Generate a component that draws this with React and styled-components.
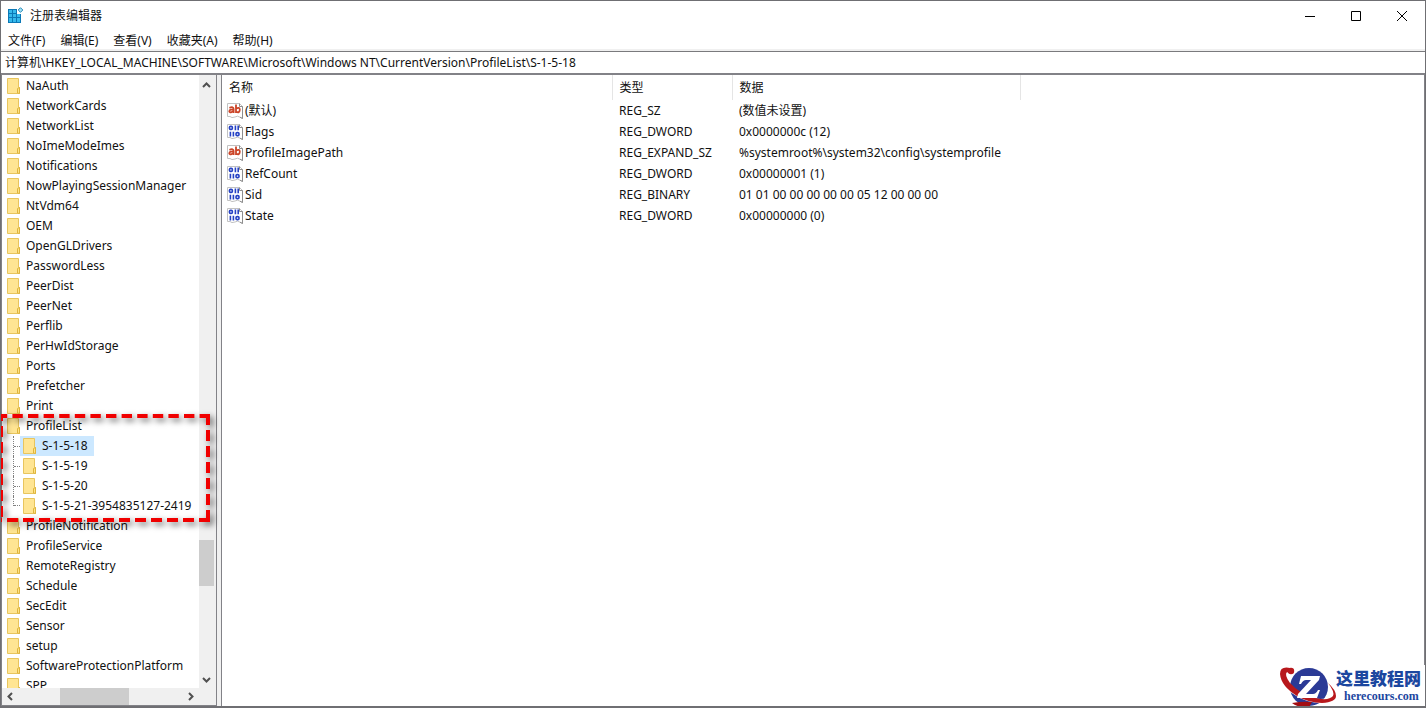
import React from "react";
import styled, { createGlobalStyle, css } from "styled-components";

const Global = createGlobalStyle`
  * { box-sizing: border-box; }
  body { margin: 0; font: 12px/20px "Noto Sans", "Noto Sans CJK SC", sans-serif; color: #111; background: #fff; }
  button, input { font: inherit; color: inherit; }
`;

const Window = styled.div`
  display: flex; flex-direction: column; height: 100vh; background: #fff;
  border: 1px solid #6f6f73; border-bottom-width: 2px; overflow: hidden; position: relative;
`;
const TitleBar = styled.header`
  display: flex; align-items: center; height: 29px; padding-left: 6px;
`;
const Title = styled.h1`
  margin: 0 auto 0 6px; font-size: 12px; font-weight: 400;
`;
const CaptionButton = styled.button`
  display: grid; place-items: center; width: 46px; height: 29px; padding: 0; border: 0; background: none;
`;
const MenuBar = styled.nav`
  display: flex; align-items: flex-end; height: 21px; padding-left: 7px; gap: 15px; background: linear-gradient(#fff 19px, #f0f0f0 19px);
`;
const MenuButton = styled.button`
  padding: 0; border: 0; background: none; line-height: 20px;
`;
const Address = styled.input`
  flex: none; width: 100%; height: 24px; padding: 0 4px 2px; border: 0; outline: 0; background: #fff;
  border-top: 1px solid #7a7a7d; border-bottom: 2px solid #828287; border-radius: 0;
`;
const Panes = styled.main`
  display: grid; grid-template-columns: 216px 1fr; column-gap: 4px; flex: 1; min-height: 0; background: #f0f0f0;
`;
const TreePane = styled.section`
  position: relative; display: grid; grid-template: 1fr 17px / 1fr 15px; min-width: 0; min-height: 0;
  padding-right: 2px; border: 0 solid #828287; border-width: 0 1px 1px; background: #f0f0f0;
`;
const TreeView = styled.div`
  overflow: hidden; background: #fff; padding-top: 1px;
`;
const List = styled.ul`
  list-style: none; margin: 0; padding: 0;
`;
const Row = styled.div`
  display: flex; align-items: center; height: 20px; white-space: nowrap;
  padding-left: ${(p) => (p.$nested ? 11 : 2)}px;
`;
const Guide = styled.span`
  flex: none; align-self: flex-start; display: flex; align-items: center;
  width: 7px; border-left: 1px dotted #808080;
  height: ${(p) => (p.$last ? 10 : 20)}px;
  &::after { content: ""; width: 7px; border-top: 1px dotted #808080; ${(p) => p.$last && css`align-self: flex-end;`} }
`;
const Label = styled.span`
  display: flex; align-items: center; gap: 5px; height: 20px; padding: 0 6px 0 3px;
  background: ${(p) => (p.$selected ? "#cce8ff" : "transparent")};
`;
const ScrollBar = styled.div`
  display: flex; background: #f0f0f0;
  flex-direction: ${(p) => (p.$vertical ? "column" : "row")};
  padding: ${(p) => (p.$vertical ? "2px 0 0" : "0 1px")};
`;
const ScrollButton = styled.button`
  display: grid; place-items: center; width: 15px; height: 17px; padding: 0; border: 0; background: none; flex: none;
`;
const Space = styled.span`
  flex: ${(p) => p.$size};
`;
const Thumb = styled.span`
  flex: ${(p) => p.$size}; background: #cdcdcd;
`;
const Marker = styled.svg`
  position: absolute; left: -2px; top: 339px; overflow: visible; pointer-events: none;
  filter: drop-shadow(3px 3px 3px rgba(0, 0, 0, 0.6));
`;
const ValuePane = styled.section`
  min-width: 0; background: #fff; border: 0 solid #828287; border-width: 0 1px 0 1px;
`;
const Table = styled.table`
  width: 100%; table-layout: fixed; border-collapse: collapse; text-align: left;
  th, td { font-weight: 400; padding: 0 7px; white-space: nowrap; }
  th { height: 25px; border-right: 1px solid #e5e5e5; }
  th:last-child { border: 0; }
  td { height: 21px; }
  td:first-child { padding-left: 5px; }
`;
const NameCell = styled.span`
  display: flex; align-items: center; gap: 2px;
`;
const Brand = styled.a`
  position: absolute; right: -1px; bottom: -2px; display: flex; align-items: center;
  width: 148px; height: 43px; background: #fff; color: #1c479f; text-decoration: none;
`;
const BrandText = styled.span`
  display: flex; flex-direction: column; padding-bottom: 4px;
  font: 900 17px/22px "Noto Sans CJK SC", sans-serif;
`;
const BrandUrl = styled.span`
  font: bold 12px/14px "Liberation Serif", serif; padding-left: 8px;
`;
const FolderIcon = styled.svg`
  flex: none;
`;

const Folder = () => (
  <FolderIcon width="14" height="16" viewBox="0 0 14 16" aria-hidden="true">
    <path d="M.5.5H11.5V9.5H12.5V15.5H.5Z" fill="#ffe593" stroke="#e8c55e" />
    <path d="M10.5 15V10.5L12.5 9.5V15.5Z" fill="#ffe38a" stroke="#dfb63e" />
  </FolderIcon>
);

const ValueIcon = ({ text }) => (
  <svg width="16" height="16" viewBox="0 0 16 16" aria-hidden="true">
    <path d="M.5.5H12.5L15.5 3.5V15.5L13 14.2L10.5 13.2L8 14L5 14.6L3 13.5H.5Z" fill="#fff" stroke="#c2c2c2" />
    <path d="M12.5.5V3.5H15.5V15.5L13 14.2" fill="none" stroke="#8e8e8e" />
    {text ? (
      <g fill="none" stroke="#cb4427" strokeWidth="1.8">
        <path d="M2.4 4.8Q6.6 3.2 6.6 6V10M6.6 6.7H4.2Q2.3 7 2.3 8.3Q2.6 9.8 4.4 9.2L6.6 8" />
        <path d="M9 1.5V10M9 5.6Q12.8 3.5 12.8 6.8Q12.6 10.5 9 8.6" />
      </g>
    ) : (
      <g fill="none" stroke="#2541c4" strokeWidth="1.6">
        <rect x="2.4" y="2.4" width="3" height="3" rx="1.2" />
        <path d="M8.4 1.5V6.2M11.2 1.5V6.2M3.4 7.8V12.4M6.4 7.8V12.4" />
        <rect x="9" y="8.6" width="3" height="3" rx="1.2" />
      </g>
    )}
  </svg>
);

const AppIcon = () => (
  <svg width="17" height="17" viewBox="0 0 17 17" aria-hidden="true">
    <path d="M1 2H10V7H14V16H1Z" fill="#0b78b6" />
    <path d="M2 3H5V6H2ZM6 3H9V6H6ZM10 7H13V10H10ZM2 7H5V10H2ZM6 7H9V10H6ZM2 11H5V15H2ZM6 11H9V15H6ZM10 11H13V15H10Z" fill="#35b9ec" />
    <path d="M13.5 .7L15.8 3L13.5 5.3L11.2 3Z" fill="#a5e2f5" stroke="#2388b8" />
  </svg>
);

const BrandIcon = () => (
  <svg width="58" height="43" viewBox="0 0 58 43" aria-hidden="true">
    <circle cx="31" cy="22" r="19" fill="#2b3a96" />
    <path d="M14 38Q25 36 34 37L31 42Q20 43 14 38Z" fill="#a30d12" />
    <path d="M5 15Q13 29 30 34Q48 39 55 31" fill="none" stroke="#fff" strokeWidth="4" />
    <path d="M12 3Q2 1 2 9Q3 21 19 31Q31 38 44 38Q58 37 58 31Q58 25 50 18Q57 27 55 31Q51 36 37 33Q22 29 12 18Q6 10 9 7Q11 9 14 8Z" fill="#b8181c" />
    <circle cx="13" cy="6" r="3.2" fill="#b8181c" />
    <path d="M23 11H42L41 15L28 29H35Q38 29 40 25H42L39 33H19L20 29L33 15H28Q25 15 23 19H21Z" fill="#fff" />
  </svg>
);

const arrows = { up: "M1 6L4.5 2.5L8 6", down: "M1 3L4.5 6.5L8 3", left: "M6 1L2.5 4.5L6 8", right: "M3 1L6.5 4.5L3 8" };
const Arrow = ({ dir }) => (
  <svg width="9" height="9" viewBox="0 0 9 9" aria-hidden="true">
    <path d={arrows[dir]} fill="none" stroke="#505050" strokeWidth="2" />
  </svg>
);

const captions = [
  ["最小化", "M0 5.5H10"],
  ["最大化", "M.5 .5H9.5V9.5H.5Z"],
  ["关闭", "M0 0L10 10M10 0L0 10"],
];
const menus = ["文件(F)", "编辑(E)", "查看(V)", "收藏夹(A)", "帮助(H)"];
const keys = [
  "NaAuth", "NetworkCards", "NetworkList", "NoImeModeImes", "Notifications", "NowPlayingSessionManager", "NtVdm64", "OEM",
  "OpenGLDrivers", "PasswordLess", "PeerDist", "PeerNet", "Perflib", "PerHwIdStorage", "Ports", "Prefetcher", "Print",
  "ProfileList", "ProfileNotification", "ProfileService", "RemoteRegistry", "Schedule", "SecEdit", "Sensor", "setup",
  "SoftwareProtectionPlatform", "SPP",
];
const profiles = ["S-1-5-18", "S-1-5-19", "S-1-5-20", "S-1-5-21-3954835127-2419"];
const values = [
  ["(默认)", "REG_SZ", "(数值未设置)"],
  ["Flags", "REG_DWORD", "0x0000000c (12)"],
  ["ProfileImagePath", "REG_EXPAND_SZ", "%systemroot%\\system32\\config\\systemprofile"],
  ["RefCount", "REG_DWORD", "0x00000001 (1)"],
  ["Sid", "REG_BINARY", "01 01 00 00 00 00 00 05 12 00 00 00"],
  ["State", "REG_DWORD", "0x00000000 (0)"],
];

export default function App() {
  return (
    <>
      <Global />
      <Window>
        <TitleBar>
          <AppIcon />
          <Title>注册表编辑器</Title>
          {captions.map(([name, d]) => (
            <CaptionButton key={name} aria-label={name}>
              <svg width="10" height="10" viewBox="0 0 10 10"><path d={d} fill="none" stroke="#000" /></svg>
            </CaptionButton>
          ))}
        </TitleBar>
        <MenuBar>{menus.map((m) => <MenuButton key={m}>{m}</MenuButton>)}</MenuBar>
        <Address aria-label="地址" defaultValue={"计算机\\HKEY_LOCAL_MACHINE\\SOFTWARE\\Microsoft\\Windows NT\\CurrentVersion\\ProfileList\\S-1-5-18"} />
        <Panes>
          <TreePane>
            <TreeView>
              <List>
                {keys.map((k) => (
                  <li key={k}>
                    <Row><Label><Folder />{k}</Label></Row>
                    {k === "ProfileList" && (
                      <List>
                        {profiles.map((p, i) => (
                          <li key={p}>
                            <Row $nested>
                              <Guide $last={i === profiles.length - 1} />
                              <Label $selected={i === 0}><Folder />{p}</Label>
                            </Row>
                          </li>
                        ))}
                      </List>
                    )}
                  </li>
                ))}
              </List>
            </TreeView>
            <ScrollBar $vertical>
              <ScrollButton aria-label="向上"><Arrow dir="up" /></ScrollButton>
              <Space $size={446} /><Thumb $size={46} /><Space $size={85} />
              <ScrollButton aria-label="向下"><Arrow dir="down" /></ScrollButton>
            </ScrollBar>
            <ScrollBar>
              <ScrollButton aria-label="向左"><Arrow dir="left" /></ScrollButton>
              <Space $size={42} /><Thumb $size={69} /><Space $size={54} />
              <ScrollButton aria-label="向右"><Arrow dir="right" /></ScrollButton>
            </ScrollBar>
            <Marker width="210" height="108" viewBox="0 0 210 108" aria-hidden="true">
              <g fill="none" stroke="#f00000" strokeWidth="4">
                <path d="M210 2H0" strokeDasharray="10.4 5.2" />
                <path d="M208 0V108" strokeDasharray="11 5" />
                <path d="M210 106H0" strokeDasharray="11 5" />
                <path d="M1 108V0" strokeDasharray="11 5" strokeDashoffset="11" />
              </g>
            </Marker>
          </TreePane>
          <ValuePane>
            <Table>
              <colgroup><col width="390" /><col width="120" /><col width="288" /><col /></colgroup>
              <thead><tr><th>名称</th><th>类型</th><th>数据</th><th aria-label="空" /></tr></thead>
              <tbody>
                {values.map(([name, type, data]) => (
                  <tr key={name}>
                    <td><NameCell><ValueIcon text={type.endsWith("SZ")} />{name}</NameCell></td>
                    <td>{type}</td><td>{data}</td><td />
                  </tr>
                ))}
              </tbody>
            </Table>
          </ValuePane>
        </Panes>
        <Brand href="#">
          <BrandIcon />
          <BrandText>这里教程网<BrandUrl>herecours.com</BrandUrl></BrandText>
        </Brand>
      </Window>
    </>
  );
}
